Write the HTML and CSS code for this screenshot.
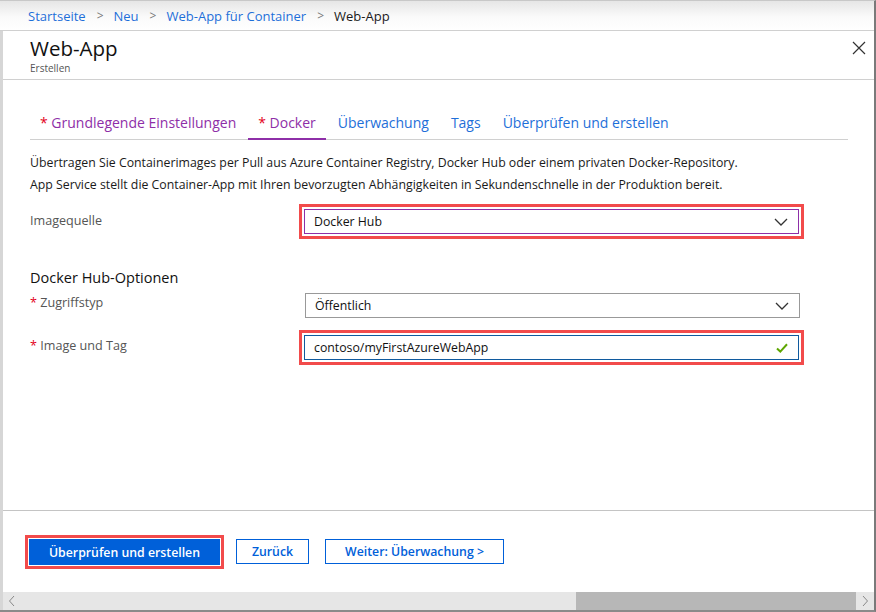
FILE: index.html
```html
<!DOCTYPE html>
<html lang="de">
<head>
<meta charset="utf-8">
<title>Web-App</title>
<link rel="stylesheet" href="styles.css">
</head>
<body>
<div class="frame">
  <nav class="breadcrumb">
    <a class="crumb">Startseite</a><span class="sep">&gt;</span>
    <a class="crumb">Neu</a><span class="sep">&gt;</span>
    <a class="crumb">Web-App für Container</a><span class="sep">&gt;</span>
    <span class="current">Web-App</span>
  </nav>
  <div class="body">
    <div class="strip"></div>
    <div class="blade">
      <header class="blade-header">
        <div class="titles">
          <h1 class="title">Web-App</h1>
          <div class="subtitle">Erstellen</div>
        </div>
        <svg class="close" width="14" height="14" viewBox="0 0 14 14"><path d="M1 1 L13 13 M13 1 L1 13" stroke="#333" stroke-width="1.2" fill="none"/></svg>
      </header>
      <main class="content">
        <div class="tabs">
          <span class="tab visited"><span class="req">*</span> Grundlegende Einstellungen</span>
          <span class="tab visited active"><span class="req">*</span> Docker</span>
          <span class="tab">Überwachung</span>
          <span class="tab">Tags</span>
          <span class="tab">Überprüfen und erstellen</span>
        </div>
        <p class="desc">Übertragen Sie Containerimages per Pull aus Azure Container Registry, Docker Hub oder einem privaten Docker-Repository.<br>App Service stellt die Container-App mit Ihren bevorzugten Abhängigkeiten in Sekundenschnelle in der Produktion bereit.</p>
        <div class="row row-first">
          <label class="label">Imagequelle</label>
          <div class="hl">
            <div class="field focus-purple">
              <span>Docker Hub</span>
              <svg class="chev" width="14" height="8" viewBox="0 0 14 8"><path d="M1 1 L7 7 L13 1" stroke="#333" stroke-width="1.3" fill="none"/></svg>
            </div>
          </div>
        </div>
        <h2 class="section">Docker Hub-Optionen</h2>
        <div class="row row-plain">
          <label class="label"><span class="req">*</span> Zugriffstyp</label>
          <div class="field plain">
            <span>Öffentlich</span>
            <svg class="chev" width="14" height="8" viewBox="0 0 14 8"><path d="M1 1 L7 7 L13 1" stroke="#333" stroke-width="1.3" fill="none"/></svg>
          </div>
        </div>
        <div class="row row-last">
          <label class="label"><span class="req">*</span> Image und Tag</label>
          <div class="hl">
            <div class="field focus-blue">
              <span>contoso/myFirstAzureWebApp</span>
              <svg class="check" width="12" height="10" viewBox="0 0 12 10"><path d="M1 5.5 L4.3 8.6 L11 1.3" stroke="#5ea600" stroke-width="2" fill="none"/></svg>
            </div>
          </div>
        </div>
      </main>
      <footer class="footer">
        <div class="hl hl-btn"><button class="btn primary">Überprüfen und erstellen</button></div>
        <button class="btn secondary back">Zurück</button>
        <button class="btn secondary next">Weiter: Überwachung &gt;</button>
      </footer>
      <div class="scrollbar">
        <svg class="arrow left" width="8" height="12" viewBox="0 0 8 12"><path d="M6 1 L1.5 6 L6 11" stroke="#888" stroke-width="1" fill="none"/></svg>
        <div class="track"><div class="thumb"></div></div>
        <svg class="arrow right" width="8" height="12" viewBox="0 0 8 12"><path d="M2 1 L6.5 6 L2 11" stroke="#888" stroke-width="1" fill="none"/></svg>
      </div>
    </div>
  </div>
</div>
</body>
</html>
```
FILE: styles.css
```css
* { box-sizing: border-box; }
html, body {
  margin: 0;
  padding: 0;
  width: 876px;
  height: 612px;
  overflow: hidden;
  background: #fff;
  font-family: "Open Sans", "Noto Sans", "Liberation Sans", sans-serif;
  color: #1a1a1a;
}
.frame {
  width: 876px;
  height: 612px;
  border-top: 1px solid #c8c8c8;
  border-right: 2px solid #7a7a7a;
  border-bottom: 2px solid #8a8a8a;
  display: flex;
  flex-direction: column;
}
.breadcrumb {
  height: 30px;
  flex: none;
  display: flex;
  align-items: center;
  padding-left: 28px;
  background: linear-gradient(#e6e6e6, #fafafa 55%, #fff);
  border-bottom: 1px solid #d0d0d0;
  font-size: 13px;
}
.crumb { color: #1e6fd9; }
.sep { color: #777; margin: 0 10px 0 11px; font-size: 12px; }
.current { color: #1a1a1a; }
.body {
  flex: 1;
  display: flex;
  min-height: 0;
}
.strip {
  width: 3px;
  flex: none;
  background: #d6d6d6;
}
.blade {
  flex: 1;
  display: flex;
  flex-direction: column;
  min-width: 0;
}
.blade-header {
  height: 49px;
  flex: none;
  border-bottom: 1px solid #d0d0d0;
  display: flex;
  justify-content: space-between;
  padding: 4px 8px 0 27px;
}
.title {
  margin: 0;
  font-size: 20.5px;
  font-weight: 400;
  line-height: 27px;
  color: #111;
}
.subtitle {
  font-size: 10px;
  color: #555;
  line-height: 12px;
  margin-top: 0;
}
.close { margin-top: 6px; }
.content {
  flex: 1;
  padding: 0 0 0 27px;
}
.tabs {
  margin-top: 30px;
  width: 818px;
  height: 30px;
  border-bottom: 1px solid #d0d0d0;
  display: flex;
  font-size: 14px;
}
.tab {
  color: #1e6fd9;
  padding: 0 10px;
  margin-right: 2px;
  line-height: 26px;
  height: 30px;
  white-space: nowrap;
}
.tab.visited { color: #8e2fa8; }
.tab.active { border-bottom: 2px solid #8e2fa8; }
.req { color: #e3001b; }
.desc {
  margin: 12px 0 0 0;
  font-size: 12.3px;
  line-height: 22px;
  color: #1a1a1a;
}
.row {
  display: flex;
  align-items: flex-start;
}
.label {
  width: 275px;
  flex: none;
  font-size: 12.6px;
  color: #555;
}
.row-first { margin-top: 14px; }
.row-first .label { padding-top: 2px; }
.hl {
  border: 3px solid #f24b4b;
  padding: 2px;
  margin-left: -6px;
  margin-top: -6px;
}
.field {
  width: 495px;
  height: 25px;
  display: flex;
  align-items: center;
  justify-content: space-between;
  padding: 0 10px 0 9px;
  font-size: 12.3px;
  color: #111;
  background: #fff;
}
.focus-purple { border: 1px solid #8e2fa8; }
.focus-blue { border: 1px solid #105a9e; }
.plain { border: 1px solid #999; }
.section {
  margin: 29px 0 0 0;
  font-size: 14.5px;
  font-weight: 400;
  color: #111;
  line-height: 20px;
}
.row-plain { margin-top: 5px; }
.row-plain .label { padding-top: 1px; }
.row-last { margin-top: 18px; }
.row-last .label { padding-top: 1px; }
.footer {
  height: 82px;
  flex: none;
  border-top: 1px solid #c4c4c4;
  display: flex;
  align-items: flex-start;
  padding: 24px 0 0 22px;
}
.hl-btn { margin: 0; padding: 1px; }
.btn {
  font-family: inherit;
  font-size: 12.3px;
  font-weight: 600;
  height: 26px;
  cursor: pointer;
}
.primary {
  background: #0060d9;
  color: #fff;
  border: 1px solid #0060d9;
  width: 191px;
  display: block;
}
.secondary {
  background: #fff;
  color: #0060d9;
  border: 1px solid #0060d9;
  margin-top: 4px;
  height: 25px;
}
.back { width: 73px; margin-left: 12px; }
.next { width: 179px; margin-left: 16px; }
.scrollbar {
  height: 18px;
  flex: none;
  background: #e6e6e6;
  display: flex;
  align-items: center;
}
.arrow.left { margin-left: 5px; }
.track {
  flex: 1;
  height: 18px;
  position: relative;
}
.thumb {
  position: absolute;
  left: 560px;
  width: 280px;
  top: 0;
  bottom: 0;
  background: #b7b7b7;
}
.arrow.right { margin-right: 5px; }
```
